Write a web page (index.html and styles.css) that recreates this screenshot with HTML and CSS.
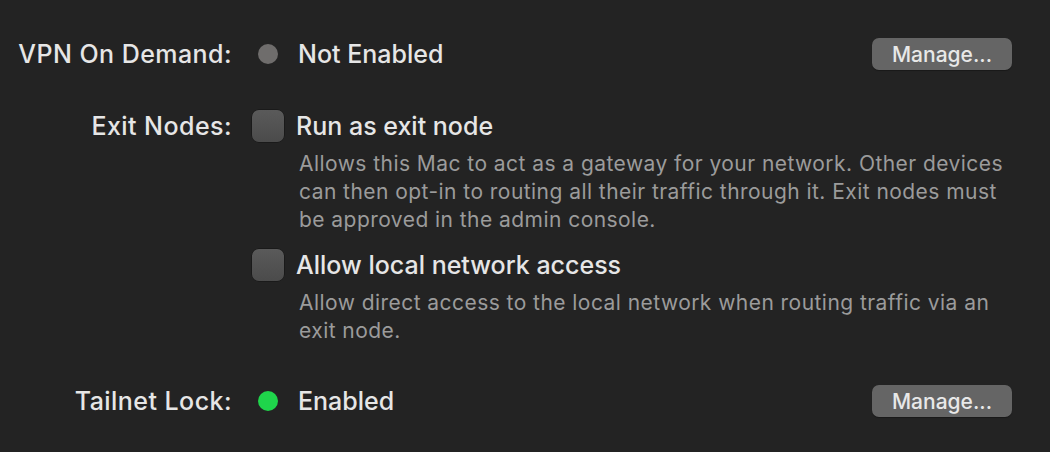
FILE: index.html
```html
<!DOCTYPE html>
<html>
<head>
<meta charset="utf-8">
<link rel="stylesheet" href="styles.css">
</head>
<body>
<div class="pane">
  <div class="row status-row first">
    <div class="label">VPN On Demand:</div>
    <div class="content status">
      <span class="dot grey"></span>
      <span class="value">Not Enabled</span>
    </div>
    <button class="btn">Manage...</button>
  </div>

  <div class="row check-row exit">
    <div class="label">Exit Nodes:</div>
    <div class="content wide">
      <div class="option">
        <span class="checkbox"></span>
        <span class="value">Run as exit node</span>
      </div>
      <p class="desc">Allows this Mac to act as a gateway for your network. Other devices can then opt-in to routing all their traffic through it. Exit nodes must be approved in the admin console.</p>
      <div class="option second">
        <span class="checkbox"></span>
        <span class="value">Allow local network access</span>
      </div>
      <p class="desc">Allow direct access to the local network when routing traffic via an exit node.</p>
    </div>
  </div>

  <div class="row status-row last">
    <div class="label">Tailnet Lock:</div>
    <div class="content status">
      <span class="dot green"></span>
      <span class="value">Enabled</span>
    </div>
    <button class="btn">Manage...</button>
  </div>
</div>
</body>
</html>
```
FILE: styles.css
```css
html, body {
  margin: 0;
  padding: 0;
  background: #232323;
}
body {
  font-family: Inter, "Noto Sans", "DejaVu Sans", sans-serif;
  color: #e6e6e6;
  width: 1050px;
  height: 452px;
  overflow: hidden;
}
.pane {
  padding: 38px 38px 0 0;
}
.row {
  display: grid;
  grid-template-columns: 232px 1fr auto;
  column-gap: 20px;
}
.label {
  text-align: right;
  font-size: 25px;
  font-weight: 500;
  line-height: 32px;
  letter-spacing: 0.45px;
}
.content.wide {
  grid-column: 2 / 4;
}
.status {
  display: flex;
  align-items: center;
  height: 32px;
}
.dot {
  width: 20px;
  height: 20px;
  border-radius: 50%;
  margin-left: 6px;
  margin-right: 20px;
}
.dot.grey { background: #6f6d6c; }
.dot.green { background: #1fd54b; }
.value {
  font-size: 25px;
  font-weight: 500;
  line-height: 32px;
  letter-spacing: 0;
}
.btn {
  width: 140px;
  height: 32px;
  border: none;
  border-radius: 7px;
  background: #656565;
  color: #e8e8e8;
  font-family: inherit;
  font-size: 21px;
  font-weight: 500;
  padding: 0;
  box-shadow: 0 1px 1px rgba(0,0,0,0.3);
}
.exit {
  margin-top: 40px;
}
.option {
  display: flex;
  align-items: center;
  height: 32px;
}
.option.second {
  margin-top: 15px;
}
.checkbox {
  width: 32px;
  height: 32px;
  border-radius: 7px;
  background: linear-gradient(#5a5a5a, #4b4b4b);
  box-shadow: 0 0 0 0.5px rgba(0,0,0,0.5);
  margin-right: 12px;
  flex: none;
}
.desc {
  margin: 8px -4px 0 47px;
  font-size: 21px;
  line-height: 28px;
  color: #9b9b9b;
  letter-spacing: 0.45px;
}
.last {
  margin-top: 40px;
}
```
